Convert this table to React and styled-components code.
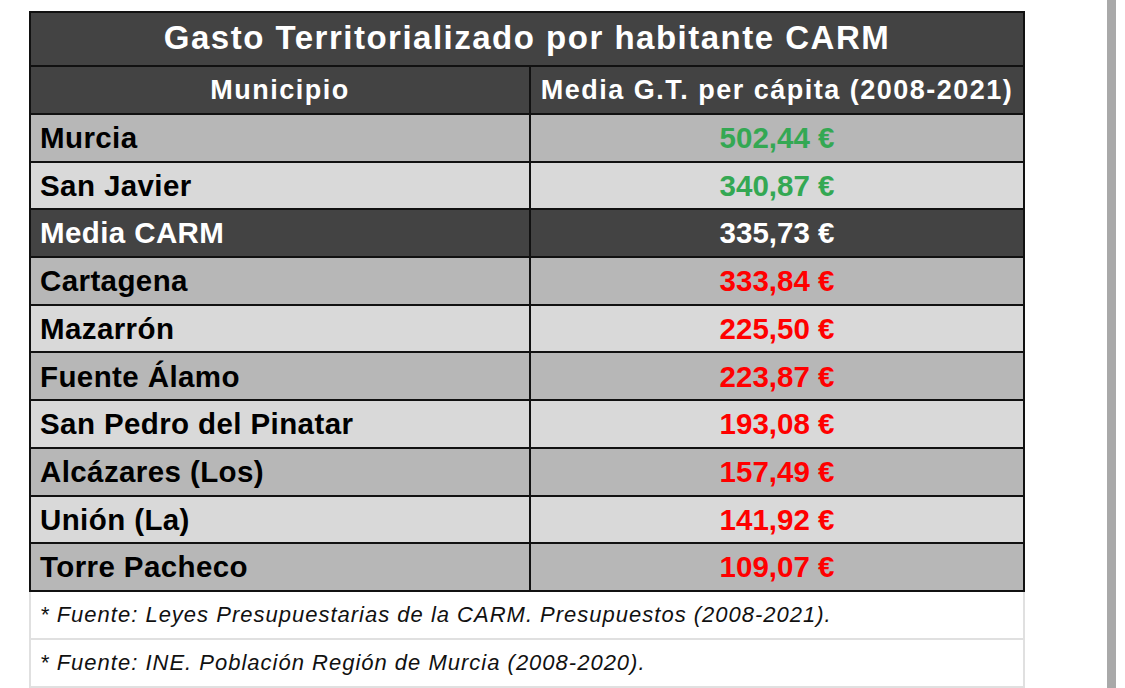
import React from 'react';
import styled, { createGlobalStyle } from 'styled-components';

const GlobalStyle = createGlobalStyle`
    html, body {
        margin: 0;
        padding: 0;
        background: #ffffff;
        font-family: "Liberation Sans", Arial, sans-serif;
    }
`;

const Page = styled.div`
    width: 1125px;
    height: 688px;
    display: flex;
    overflow: hidden;
`;

const TableArea = styled.div`
    padding: 11px 0 0 29px;
    width: 994px;
`;

const SideBar = styled.div`
    width: 9px;
    height: 100%;
    margin-left: 84px;
    background: #a9a9a9;
`;

const Table = styled.table`
    width: 994px;
    border-collapse: collapse;
    table-layout: fixed;
`;

const TitleCell = styled.th`
    height: 54px;
    line-height: 1;
    background: #434343;
    color: #ffffff;
    border: 2px solid #111;
    font-size: 33px;
    letter-spacing: 1.5px;
    font-weight: bold;
    text-align: center;
    padding: 0 0 3px 0;
    box-sizing: border-box;
`;

const HeadCell = styled.th`
    height: 46px;
    line-height: 1;
    background: #434343;
    color: #ffffff;
    border: 2px solid #111;
    font-size: 27px;
    letter-spacing: 1.5px;
    font-weight: bold;
    text-align: center;
    padding: 0;
    white-space: nowrap;
`;

const rowBg = { odd: '#b7b7b7', even: '#d9d9d9', dark: '#434343' };

const NameCell = styled.td`
    height: 45.7px;
    line-height: 1;
    background: ${p => rowBg[p.$tone]};
    color: ${p => (p.$tone === 'dark' ? '#ffffff' : '#000000')};
    border: 2px solid #111;
    font-size: 29.5px;
    letter-spacing: 0.4px;
    font-weight: bold;
    padding: 0 0 0 9px;
    white-space: nowrap;
`;

const ValueCell = styled(NameCell)`
    text-align: center;
    padding: 0;
    letter-spacing: 0;
    color: ${p => p.$color};
`;

const NoteCell = styled.td`
    height: 46px;
    line-height: 1;
    background: #ffffff;
    border: 2px solid #e0e0e0;
    border-top: none;
    font-size: 22px;
    letter-spacing: 1px;
    font-style: italic;
    color: #111;
    padding: 0 0 0 9px;
    white-space: nowrap;
`;

const GREEN = '#34a853';
const RED = '#ff0000';

const rows = [
    { name: 'Murcia', value: '502,44 €', color: GREEN, tone: 'odd' },
    { name: 'San Javier', value: '340,87 €', color: GREEN, tone: 'even' },
    { name: 'Media CARM', value: '335,73 €', color: '#ffffff', tone: 'dark' },
    { name: 'Cartagena', value: '333,84 €', color: RED, tone: 'odd' },
    { name: 'Mazarrón', value: '225,50 €', color: RED, tone: 'even' },
    { name: 'Fuente Álamo', value: '223,87 €', color: RED, tone: 'odd' },
    { name: 'San Pedro del Pinatar', value: '193,08 €', color: RED, tone: 'even' },
    { name: 'Alcázares (Los)', value: '157,49 €', color: RED, tone: 'odd' },
    { name: 'Unión (La)', value: '141,92 €', color: RED, tone: 'even' },
    { name: 'Torre Pacheco', value: '109,07 €', color: RED, tone: 'odd' },
];

const notes = [
    '* Fuente: Leyes Presupuestarias de la CARM. Presupuestos (2008-2021).',
    '* Fuente: INE. Población Región de Murcia (2008-2020).',
];

export default function App() {
    return (
        <>
            <GlobalStyle />
            <Page>
                <TableArea>
                    <Table>
                        <colgroup>
                            <col style={{ width: '500px' }} />
                            <col style={{ width: '494px' }} />
                        </colgroup>
                        <thead>
                            <tr>
                                <TitleCell colSpan={2}>Gasto Territorializado por habitante CARM</TitleCell>
                            </tr>
                            <tr>
                                <HeadCell>Municipio</HeadCell>
                                <HeadCell>Media G.T. per cápita (2008-2021)</HeadCell>
                            </tr>
                        </thead>
                        <tbody>
                            {rows.map(r => (
                                <tr key={r.name}>
                                    <NameCell $tone={r.tone}>{r.name}</NameCell>
                                    <ValueCell $tone={r.tone} $color={r.color}>{r.value}</ValueCell>
                                </tr>
                            ))}
                            {notes.map(n => (
                                <tr key={n}>
                                    <NoteCell colSpan={2}>{n}</NoteCell>
                                </tr>
                            ))}
                        </tbody>
                    </Table>
                </TableArea>
                <SideBar />
            </Page>
        </>
    );
}
